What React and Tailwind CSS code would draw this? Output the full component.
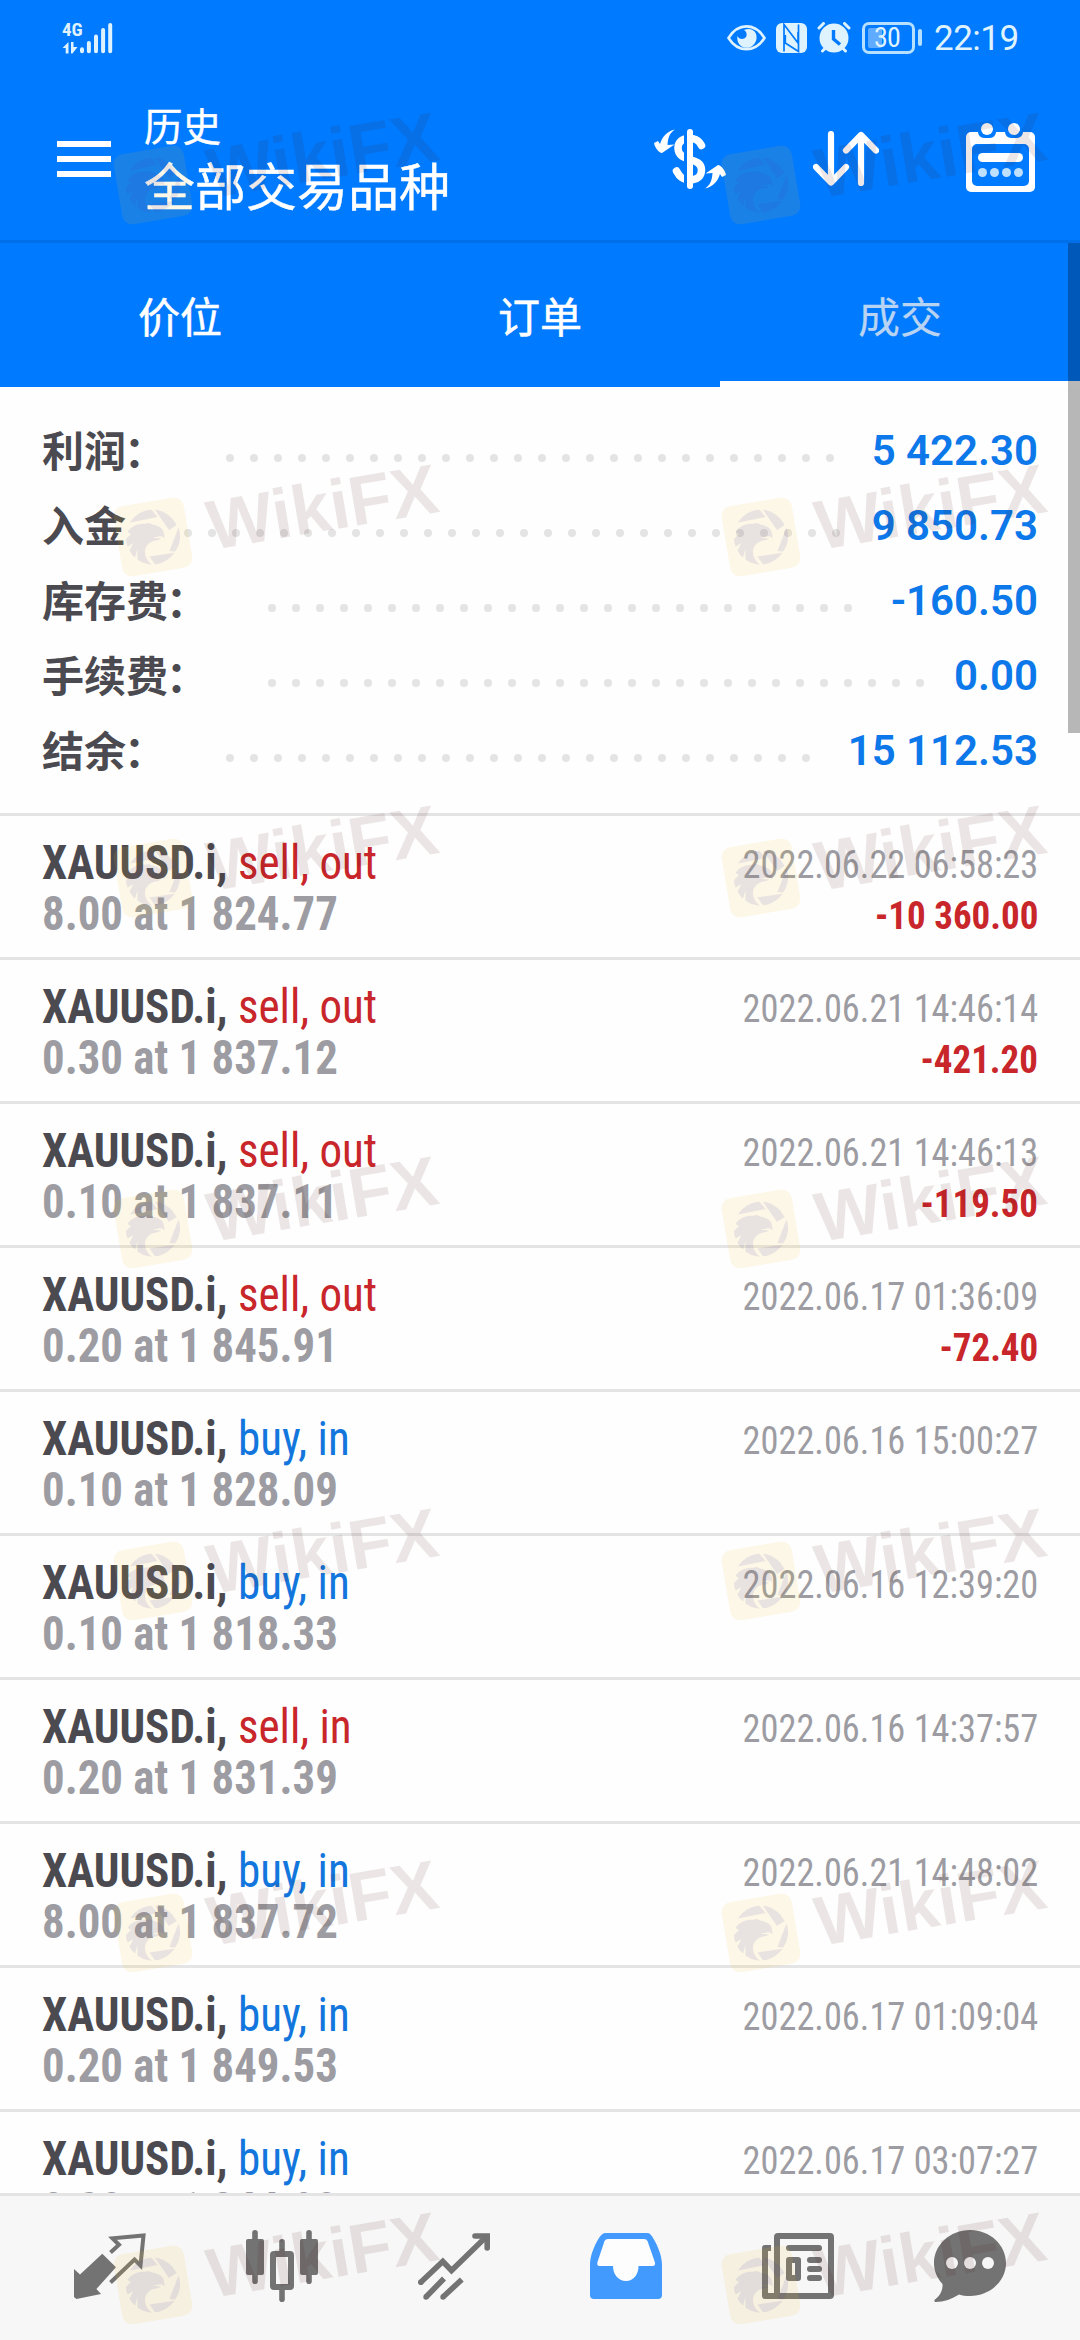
import React from "react";

const summary = [
  { label: "利润", colon: true, dots: 26, value: "5 422.30" },
  { label: "入金", colon: false, dots: 28, value: "9 850.73" },
  { label: "库存费", colon: true, dots: 25, value: "-160.50" },
  { label: "手续费", colon: true, dots: 28, value: "0.00" },
  { label: "结余", colon: true, dots: 25, value: "15 112.53" },
];

const deals = [
  { side: "sell", dir: "out", vol: "8.00 at 1 824.77", time: "2022.06.22 06:58:23", profit: "-10 360.00" },
  { side: "sell", dir: "out", vol: "0.30 at 1 837.12", time: "2022.06.21 14:46:14", profit: "-421.20" },
  { side: "sell", dir: "out", vol: "0.10 at 1 837.11", time: "2022.06.21 14:46:13", profit: "-119.50" },
  { side: "sell", dir: "out", vol: "0.20 at 1 845.91", time: "2022.06.17 01:36:09", profit: "-72.40" },
  { side: "buy", dir: "in", vol: "0.10 at 1 828.09", time: "2022.06.16 15:00:27" },
  { side: "buy", dir: "in", vol: "0.10 at 1 818.33", time: "2022.06.16 12:39:20" },
  { side: "sell", dir: "in", vol: "0.20 at 1 831.39", time: "2022.06.16 14:37:57" },
  { side: "buy", dir: "in", vol: "8.00 at 1 837.72", time: "2022.06.21 14:48:02" },
  { side: "buy", dir: "in", vol: "0.20 at 1 849.53", time: "2022.06.17 01:09:04" },
  { side: "buy", dir: "in", vol: "0.20 at 1 844.90", time: "2022.06.17 03:07:27" },
];

const watermarkRows = [184.5, 536.5, 877.5, 1229, 1581, 1933, 2284.5];
const watermarkCols = [153, 760.5];

function StatusBar() {
  return (
    <div className="flex h-[75px] items-center justify-between pr-[62px] pl-[62px] text-[#dff3ff]">
      <div className="flex h-[32px] items-end">
        <div className="flex w-[18px] flex-col">
          <span className="font-['Roboto'] text-[19px] leading-[16px] font-bold font-stretch-condensed">4G</span>
          <svg className="mt-[4px] block h-[12px] w-[16px]" viewBox="0 0 16 12" fill="currentColor">
            <path d="M6.500 0v11.500H3.700V6H0.500z" />
            <path d="M9 0h2.500v5H15.500L10.500 11.500H9z" />
          </svg>
        </div>
        <svg className="block h-[32px] w-[33px]" viewBox="80 21 33 32" stroke="currentColor" strokeWidth="4" strokeLinecap="round">
          <path d="M82 48.200v2M88.900 42v8.200M96 35.500v14.700M103.100 29v21.200M110.200 24v26.200" />
        </svg>
      </div>
      <div className="flex items-center">
        <svg className="block h-[30px] w-[39px]" viewBox="0 0 39 30" fill="none" stroke="currentColor" strokeWidth="2.600">
          <path d="M1.500 15C11 -0.500 28 -0.500 37.500 15C28 30 11 30 1.500 15z" />
          <path d="M17 7C25 4 30.500 9 29.500 16C28.500 22 23 26 17 24.500C12 23 9.500 18 10.500 13C12 17 18 17 19.500 13C20 10 19 8 17 7z" fill="currentColor" stroke="none" />
        </svg>
        <svg className="ml-[10px] block h-[30px] w-[31px]" viewBox="0 0 31 30">
          <rect width="31" height="30" rx="6" fill="currentColor" />
          <path d="M8 28.500V1.500L22 20V9M9.300 12V20L22.500 28.500V1.500" fill="none" stroke="#007aff" strokeWidth="1.700" />
        </svg>
        <svg className="ml-[10px] block h-[31px] w-[34px]" viewBox="0 0 34 31">
          <circle cx="17" cy="16" r="14.500" fill="currentColor" />
          <path d="M2 6L6.500 1.500M32 6L27.500 1.500M5.500 29l4-4M28.500 29l-4-4" stroke="currentColor" strokeWidth="3" strokeLinecap="round" />
          <path d="M16.500 8v9l6.500 5.500" fill="none" stroke="#007aff" strokeWidth="3.400" />
        </svg>
        <div className="ml-[11px] flex h-[32px] w-[53px] items-center rounded-[7px] border-[3px] border-[#b5e0ff] p-[3px]">
          <div className="flex h-[20px] w-[14px] items-center rounded-[2px] bg-[#5fabff] pl-[6px]">
            <span className="font-['Roboto'] text-[28px] leading-[20px] tracking-[-0.800px] font-stretch-semi-condensed">30</span>
          </div>
        </div>
        <div className="ml-[3px] h-[17px] w-[4px] rounded-full bg-[#b5e0ff]" />
        <span className="ml-[12px] w-[84px] pt-[2px] font-['Roboto'] text-[35px] leading-[36px] tracking-[-0.500px]">22:19</span>
      </div>
    </div>
  );
}

function CurrencyIcon() {
  const arrow = "M0 14L4 12L6 15C8 8 13 2 21 0.500C16 4 14 8 13.500 16L20.500 15.500L8 24C5 24 0.500 18 0 14z";
  return (
    <svg className="block h-[60px] w-[72px]" viewBox="0 0 72 60">
      <path d="M47.500 16.500C44 9.500 39 9.500 35 9.500C27 9.500 24 14 24 19C24 34 47.500 27 47.500 41C47.500 48 42 51 36 51C28 51 25 47 22.500 42" fill="none" stroke="white" strokeWidth="7.500" strokeLinecap="round" />
      <path d="M31.500 0V60" stroke="#007aff" strokeWidth="3" />
      <path d="M36 3V57" stroke="white" strokeWidth="6" strokeLinecap="round" />
      <path d={arrow} fill="white" />
      <path d={arrow} fill="white" transform="rotate(180 36 30)" />
    </svg>
  );
}

function SortIcon() {
  return (
    <svg className="block h-[56px] w-[66px]" viewBox="0 0 66 56" fill="none" stroke="white" strokeWidth="6.200" strokeLinecap="round" strokeLinejoin="round">
      <path d="M18 3V51M3 36L18 51.500L33 36" />
      <path d="M48 52V4M33 19.500L48 4L63 19.500" />
    </svg>
  );
}

function CalendarIcon() {
  return (
    <svg className="block h-[69px] w-[69px]" viewBox="0 0 69 69">
      <rect y="9" width="69" height="60" rx="5" fill="white" />
      <rect x="6" y="21" width="57" height="42" rx="5" fill="#007aff" />
      <path d="M12 0h18v9a6 6 0 0 1-6 6h-6a6 6 0 0 1-6-6zM39 0h18v9a6 6 0 0 1-6 6h-6a6 6 0 0 1-6-6z" fill="#007aff" />
      <circle cx="21" cy="6" r="6" fill="white" />
      <circle cx="48" cy="6" r="6" fill="white" />
      <rect x="12" y="30" width="45" height="9" rx="4.500" fill="white" />
      <g fill="#bfe0ff">
        <circle cx="16.500" cy="49.500" r="4.500" />
        <circle cx="28.500" cy="49.500" r="4.500" />
        <circle cx="40.500" cy="49.500" r="4.500" />
        <circle cx="52.500" cy="49.500" r="4.500" />
      </g>
    </svg>
  );
}

function Toolbar() {
  return (
    <div className="flex h-[165px] items-center pr-[45px] pl-[57px]">
      <div className="flex w-[54px] flex-col gap-[9px] pt-[3px]">
        <div className="h-[6px] bg-white" />
        <div className="h-[6px] bg-white" />
        <div className="h-[6px] bg-white" />
      </div>
      <div className="ml-[33px] flex flex-1 flex-col pb-[8px] text-white [-webkit-text-stroke:0.400px_white]">
        <span className="text-[38.500px] leading-[60px]">历史</span>
        <span className="text-[51px] leading-[60px]">全部交易品种</span>
      </div>
      <div className="flex items-center gap-[87px] pt-[3px]">
        <CurrencyIcon />
        <SortIcon />
        <div className="-mt-[3px]">
          <CalendarIcon />
        </div>
      </div>
    </div>
  );
}

function Tabs() {
  return (
    <div className="grid h-[144px] grid-cols-3 bg-[#007aff] text-[42px] text-white">
      <div className="flex items-center justify-center pb-[2px] [-webkit-text-stroke:0.500px_white]">价位</div>
      <div className="flex items-center justify-center pb-[2px] [-webkit-text-stroke:0.500px_white]">订单</div>
      <div className="flex items-center justify-center border-b-[6px] border-white pt-[4px] text-[#b9d3f3] [-webkit-text-stroke:0.200px_#b9d3f3]">成交</div>
    </div>
  );
}

function Summary() {
  return (
    <div className="flex h-[426px] flex-col px-[42px] pt-[25px]">
      {summary.map((row) => (
        <div key={row.label} className="flex h-[75px] items-center">
          <span className="-mt-[2px] text-[42px] leading-[75px] font-bold whitespace-nowrap text-[#4b4a50]">
            {row.label}
            {row.colon && <span className="mr-[2px] -ml-[2px]">：</span>}
          </span>
          <div className="ml-[58px] flex gap-[16px] pt-[17px]">
            {Array.from({ length: row.dots }, (_, i) => (
              <div key={i} className="size-[8px] rounded-full bg-[#e4e4e4]" />
            ))}
          </div>
          <span className="ml-auto pt-[2px] font-['Roboto'] text-[42px] leading-[75px] font-semibold whitespace-nowrap text-[#0c78ea]">{row.value}</span>
        </div>
      ))}
    </div>
  );
}

function Deal({ side, dir, vol, time, profit }) {
  return (
    <div className="flex h-[144px] justify-between border-t-[3px] border-[#e4e4e4] px-[42px] pt-[21px] font-['Roboto'] font-stretch-condensed">
      <div className="flex flex-col items-start">
        <span className="origin-left scale-x-[0.938] text-[48px] leading-[51px] whitespace-nowrap">
          <span className="font-bold text-[#4b4a50]">XAUUSD.i, </span>
          <span className={side === "sell" ? "font-[430] text-[#c8262a]" : "font-[430] text-[#1276dd]"}>
            {side}, {dir}
          </span>
        </span>
        <span className="origin-left scale-x-[0.934] text-[48px] leading-[51px] font-bold whitespace-nowrap text-[#9c9ca2]">{vol}</span>
      </div>
      <div className="flex flex-col items-end pt-[3px]">
        <span className="origin-right scale-x-[0.932] text-[39px] leading-[51px] whitespace-nowrap text-[#9c9ca2]">{time}</span>
        {profit && <span className="origin-right scale-x-[0.948] text-[39px] leading-[51px] font-bold whitespace-nowrap text-[#c8262a]">{profit}</span>}
      </div>
    </div>
  );
}

function NavBar() {
  const cell = "flex items-center justify-center";
  const icon = "block size-[72px] overflow-visible";
  return (
    <div className="grid h-[147px] shrink-0 grid-cols-6 border-t-[3px] border-[#e4e4e4] bg-[#f7f7f7] px-[24px]">
      <div className={cell}>
        <svg className={icon} viewBox="0 0 72 72">
          <path d="M0 37L6 42.500L28.300 21.700L42 35.300L22.400 57L27 62L2.400 67L0 65z" fill="#737373" />
          <path d="M36.500 20.500L45 12.800L38.500 6.300L69.500 3.500L66.500 33.500L60.500 27.500L36.500 50.500" fill="none" stroke="#737373" strokeWidth="4" />
        </svg>
      </div>
      <div className={cell}>
        <svg className={icon} viewBox="0 0 72 72" fill="#737373">
          <rect y="7" width="18" height="36" rx="2" />
          <rect x="6.200" y="-2" width="5.600" height="54" rx="2.800" />
          <rect x="54" y="7" width="18" height="36" rx="2" />
          <rect x="60.200" y="-2" width="5.600" height="54" rx="2.800" />
          <rect x="33.200" y="7" width="5.600" height="15" rx="2.800" />
          <rect x="33.200" y="55" width="5.600" height="15" rx="2.800" />
          <rect x="27" y="22" width="18" height="33" rx="1" fill="none" stroke="#737373" strokeWidth="6" />
        </svg>
      </div>
      <div className={cell}>
        <svg className={icon} viewBox="0 0 72 72" fill="none" stroke="#737373" strokeWidth="5.600">
          <path d="M2.500 50.500L24.800 29.500L33.500 38.500L69 4" />
          <path d="M57 4H69.200V16" strokeLinecap="round" />
          <path d="M26 46.500L8 65M43.800 47.500L25 65" />
          <g fill="#737373" stroke="none">
            <circle cx="2.800" cy="50.200" r="2.800" />
            <circle cx="8" cy="65" r="2.700" />
            <circle cx="25" cy="65" r="2.700" />
          </g>
        </svg>
      </div>
      <div className={cell}>
        <svg className={icon} viewBox="0 0 72 72">
          <path d="M16 1H57C60 1 61.500 3 63 6C68 14 72 24 72 33V63Q72 67 68 67H4Q0 67 0 63V33C0 24 4 14 9 6C11 3 12.500 1 16 1z" fill="#429aff" />
          <path d="M18 7Q15.500 7 14.500 9L7.500 30Q6.500 34 9.500 34H23C23 42 28 49 36 49C44 49 48.500 42 48.500 34H62.500Q66 34 64.800 30L57.500 9Q56.500 7 54 7z" fill="#fdfdfd" />
        </svg>
      </div>
      <div className={cell}>
        <svg className={icon} viewBox="0 0 72 72" fill="none" stroke="#737373" strokeWidth="6">
          <rect x="15" y="4" width="54" height="60" rx="1" />
          <path d="M9 16H3V64H15" strokeLinejoin="round" />
          <path d="M27 16H57M48 28H57M48 37H57M48 46H57" strokeLinecap="round" />
          <rect x="27" y="28" width="9" height="18" strokeLinejoin="round" />
        </svg>
      </div>
      <div className={cell}>
        <svg className={icon} viewBox="0 0 72 72" fill="#737373">
          <path d="M36 -2C56 -2 72 13 72 31C72 49 56 64 36 64C32 64 28 63.500 25 62.500C18 67 10 70 1.500 70Q0 70 0.500 68C6 64 9 58 8.500 52C3 46 0 39 0 31C0 13 16 -2 36 -2z" />
          <g fill="#f7f7f7">
            <circle cx="18" cy="31" r="6" />
            <circle cx="36" cy="31" r="6" />
            <circle cx="54" cy="31" r="6" />
          </g>
        </svg>
      </div>
    </div>
  );
}

function Watermark({ x, y }) {
  return (
    <div className="absolute h-[100px] w-[340px]" style={{ left: x - 50, top: y - 50 }}>
      <svg className="absolute top-0 left-0 block h-[100px] w-[100px]" viewBox="-50 -50 100 100">
        <rect x="-35.500" y="-35.500" width="71" height="71" rx="10" fill="rgba(240,190,40,0.110)" transform="rotate(-9.500)" />
        <g fill="rgba(63,60,190,0.105)">
          <path d="M-23 -14.500C-18 -22 -10 -27 -1.500 -27.200L4.500 -20z" />
          <path d="M2 -27.200C11 -26.500 19 -20.500 23.500 -12L16 -7z" />
          <path d="M25.500 -9.500C28.500 -1 27 8 22 14.500L16.500 14z" />
          <path d="M-3.500 19.500L21.500 15.700C17 22 10 26.500 2 27.300z" />
          <path d="M-25.500 -5C-22 -11 -15 -13.500 -8 -13.300L-4 -14C-1 -12 5 -11.500 8 -9C11 -6.500 11.500 -2 11.500 1.500C10 -0.500 8.500 -1 6 -0.500C4 0 2 0 -0.500 0.500L8 1.500C6 3.500 3 3 0.500 4C-5 6 -8 10 -8 15C-8 20 -5 25 -1 27.500C-7 27.500 -12 25 -15.500 22.500L-15.500 12L-18 20.500C-21 18 -22.500 15.500 -23.500 13.500L-19.500 6L-25.500 9.500C-26.500 7 -27 4.500 -27 2L-22 -3z" />
        </g>
      </svg>
      <span className="absolute top-[-15px] left-[103px] origin-center -rotate-[9.500deg] font-['Liberation_Sans'] text-[70px] leading-[70px] font-bold whitespace-nowrap text-[rgba(76,30,15,0.105)]">
        WikiFX
      </span>
    </div>
  );
}

export default function App() {
  return (
    <div className="relative flex h-[2340px] w-[1080px] flex-col overflow-hidden bg-[#fefefe] font-['Noto_Sans_CJK_SC','Roboto',sans-serif]">
      <header className="shrink-0 border-b-[3px] border-[#0070ea] bg-[#007aff]">
        <StatusBar />
        <Toolbar />
      </header>
      <main className="relative min-h-0 flex-1 overflow-hidden">
        <Tabs />
        <Summary />
        {deals.map((d) => (
          <Deal key={d.time + d.vol} {...d} />
        ))}
        <div className="absolute top-0 right-0 h-[490px] w-[12px] bg-black/28" />
      </main>
      <NavBar />
      <div className="pointer-events-none absolute inset-0 overflow-hidden">
        {watermarkRows.map((y) => watermarkCols.map((x) => <Watermark key={x + "-" + y} x={x} y={y} />))}
      </div>
    </div>
  );
}
